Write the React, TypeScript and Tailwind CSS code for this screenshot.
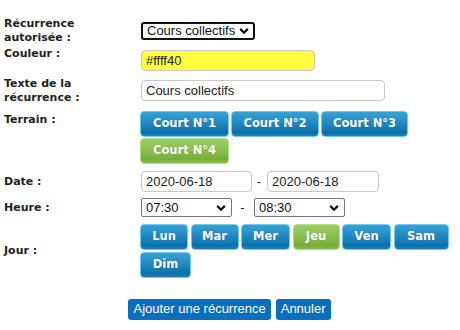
import { useState } from "react";

const LABEL =
  "w-[136px] shrink-0 text-[11px] font-bold leading-[13.5px] text-[#222] font-['DejaVu_Sans',Verdana,sans-serif]";
const FIELD =
  "ml-px block h-[21px] rounded-[4px] border border-[#c8c8c8] px-[4px] text-[13px] text-[#222] outline-none font-['Liberation_Sans',Arial,sans-serif]";
const BTN_BLUE =
  "bg-[linear-gradient(to_bottom,#37a1d3_0%,#2389c3_45%,#0d6fa9_85%,#1b80b9_100%)] border-[#72c9ee]";
const BTN_GREEN =
  "bg-[linear-gradient(to_bottom,#9dcc66_0%,#8bbf51_45%,#78ad39_85%,#86bb48_100%)] border-[#b6e07e]";

const COURTS = [
  { name: "Court N°1", w: "w-[89px]" },
  { name: "Court N°2", w: "w-[88px]" },
  { name: "Court N°3", w: "w-[87px]" },
  { name: "Court N°4", w: "w-[89px]" },
];

const DAYS = [
  { name: "Lun", w: "w-[48px]" },
  { name: "Mar", w: "w-[48px]" },
  { name: "Mer", w: "w-[49px]" },
  { name: "Jeu", w: "w-[47px]" },
  { name: "Ven", w: "w-[49px]" },
  { name: "Sam", w: "w-[55px]" },
  { name: "Dim", w: "w-[51px]" },
];

function Chevron() {
  return (
    <svg width="10" height="7" viewBox="0 0 10 7" className="pointer-events-none">
      <path d="M1.2 1.4 L5 5.2 L8.8 1.4" fill="none" stroke="#111" strokeWidth="2.2" />
    </svg>
  );
}

function Select({
  value,
  options,
  className,
  focused,
}: {
  value: string;
  options: string[];
  className: string;
  focused?: boolean;
}) {
  return (
    <div className={`relative ml-px shrink-0 ${className}`}>
      <select
        defaultValue={value}
        className={`block h-full w-full appearance-none bg-white pl-[4px] text-[13px] leading-none text-[#111] outline-none font-['Liberation_Sans',Arial,sans-serif] ${
          focused
            ? "rounded-[3px] border-2 border-[#111] pl-[3px]"
            : "rounded-[2px] border border-[#767676]"
        }`}
      >
        {options.map((o) => (
          <option key={o}>{o}</option>
        ))}
      </select>
      <span className="pointer-events-none absolute right-[6px] top-1/2 -translate-y-1/2 flex">
        <Chevron />
      </span>
    </div>
  );
}

function Btn({
  label,
  w,
  active,
  onClick,
}: {
  label: string;
  w: string;
  active: boolean;
  onClick: () => void;
}) {
  return (
    <button
      type="button"
      onClick={onClick}
      className={`h-[26px] ${w} rounded-[4px] border text-[11.5px] font-bold text-white [text-shadow:0_0_1px_rgba(0,0,0,0.25)] font-['DejaVu_Sans',Verdana,sans-serif] ${
        active ? BTN_GREEN : BTN_BLUE
      }`}
    >
      {label}
    </button>
  );
}

export default function App() {
  const [court, setCourt] = useState("Court N°4");
  const [day, setDay] = useState("Jeu");

  return (
    <div className="h-[330px] w-[460px] overflow-hidden bg-white px-[4px] pt-[17px]">
      <div className="flex h-[27px] items-center">
        <div className={LABEL}>
          Récurrence
          <br />
          autorisée :
        </div>
        <Select
          value="Cours collectifs"
          options={["Cours collectifs", "Cours particuliers", "Tournoi"]}
          className="h-[18px] w-[114px]"
          focused
        />
      </div>

      <div className="mt-[6px] flex items-start">
        <div className={`${LABEL} -mt-[3px]`}>Couleur :</div>
        <input defaultValue="#ffff40" className={`${FIELD} w-[174px] bg-[#ffff40]`} />
      </div>

      <div className="mt-[6px] flex h-[27px] items-center">
        <div className={LABEL}>
          Texte de la
          <br />
          récurrence :
        </div>
        <input defaultValue="Cours collectifs" className={`${FIELD} w-[244px] bg-white`} />
      </div>

      <div className="mt-[7px] flex items-start">
        <div className={`${LABEL} mt-[2px]`}>Terrain :</div>
        <div className="flex w-[312px] flex-wrap gap-x-[2px] gap-y-px">
          {COURTS.map((c) => (
            <Btn
              key={c.name}
              label={c.name}
              w={c.w}
              active={court === c.name}
              onClick={() => setCourt(c.name)}
            />
          ))}
        </div>
      </div>

      <div className="mt-[7px] flex items-center">
        <div className={LABEL}>Date :</div>
        <input defaultValue="2020-06-18" className={`${FIELD} w-[111px] bg-white`} />
        <span className="w-[14px] text-center text-[13px] text-[#222] font-['Liberation_Sans',Arial,sans-serif]">
          -
        </span>
        <input defaultValue="2020-06-18" className={`${FIELD} ml-0 w-[112px] bg-white`} />
      </div>

      <div className="mt-[6px] flex items-center">
        <div className={LABEL}>Heure :</div>
        <Select value="07:30" options={["07:00", "07:30", "08:00"]} className="h-[19px] w-[91px]" />
        <span className="w-[21px] text-center text-[13px] text-[#222] font-['Liberation_Sans',Arial,sans-serif]">
          -
        </span>
        <Select value="08:30" options={["08:00", "08:30", "09:00"]} className="ml-0 h-[19px] w-[91px]" />
      </div>

      <div className="mt-[6px] flex items-center">
        <div className={LABEL}>Jour :</div>
        <div className="flex w-[312px] flex-wrap gap-x-[2.5px] gap-y-[2px]">
          {DAYS.map((d) => (
            <Btn
              key={d.name}
              label={d.name}
              w={d.w}
              active={day === d.name}
              onClick={() => setDay(d.name)}
            />
          ))}
        </div>
      </div>

      <div className="mt-[21px] flex justify-center gap-[5px] pr-[1px] font-['Liberation_Sans',Arial,sans-serif]">
        <button
          type="button"
          className="h-[21px] rounded-[3px] bg-[#0b6ebd] px-[5px] text-[13px] text-white"
        >
          Ajouter une récurrence
        </button>
        <button
          type="button"
          className="h-[21px] rounded-[3px] bg-[#0b6ebd] px-[5px] text-[13px] text-white"
        >
          Annuler
        </button>
      </div>
    </div>
  );
}
